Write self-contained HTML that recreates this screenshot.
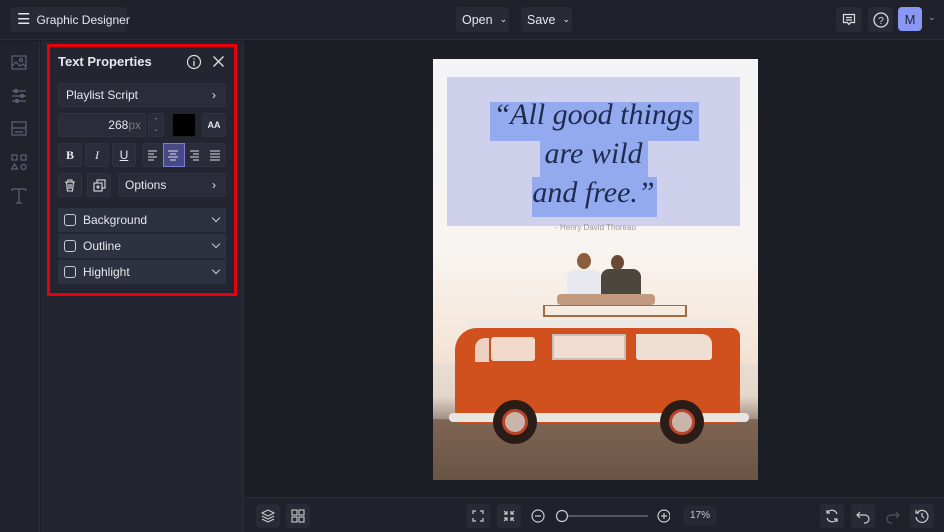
<!DOCTYPE html>
<html><head><meta charset="utf-8"><style>
*{box-sizing:border-box;margin:0;padding:0}
body{width:944px;height:532px;overflow:hidden;background:#1c1e26;font-family:"Liberation Sans",sans-serif;color:#e6e7ee;position:relative}
.abs{position:absolute}
.top{left:0;top:0;width:944px;height:40px;background:#1f212b;border-bottom:1px solid #2b2e3a}
.btn{position:absolute;background:#282b36;border-radius:4px;font-size:13px;color:#e6e7ee;display:flex;align-items:center;white-space:nowrap}
.side{left:0;top:41px;width:40px;height:491px;background:#20222c;border-right:1px solid #2b2e3a}
.panel{left:41px;top:41px;width:203px;height:491px;background:#232530;border-right:1px solid #2b2e3a}
.pb{position:absolute;background:#2a2d39;border:1px solid #30333f;border-radius:3px;font-size:12px;color:#e6e7ee;display:flex;align-items:center;justify-content:center}
.row{position:absolute;left:58px;width:168px;height:24px;background:#2e3140;font-size:12px;display:flex;align-items:center}
.cb{width:12px;height:12px;border:1.3px solid #c9cad4;border-radius:3px;margin:0 7px 0 6px}
.chev{position:absolute;right:7px;top:7px;width:6px;height:6px;border-right:1.4px solid #ccc;border-bottom:1.4px solid #ccc;transform:rotate(45deg)}
.bot{left:244px;top:497px;width:700px;height:35px;background:#1f212b;border-top:1px solid #2b2e3a}
.ib{position:absolute;width:24px;height:24px;background:#282b36;border-radius:4px;top:504px}
svg{display:block}
</style></head><body>
<div class="abs top"></div>
<div class="btn" style="left:10px;top:7px;width:117px;height:25px"><span style="margin-left:7px;font-size:15px;line-height:1">☰</span><span style="margin-left:6px;font-size:12px">Graphic Designer</span></div>
<div class="btn" style="left:456px;top:7px;width:53px;height:25px;padding-left:6px;font-size:12.5px">Open <span style="font-size:9px;margin-left:7px">⌄</span></div>
<div class="btn" style="left:521px;top:7px;width:51px;height:25px;padding-left:6px;font-size:12.5px">Save <span style="font-size:9px;margin-left:7px">⌄</span></div>
<div class="btn" style="left:836px;top:7px;width:26px;height:25px;justify-content:center"><svg width="14" height="14" viewBox="0 0 14 14"><path d="M1.5 1.5h11v8h-4l-1.5 2-1.5-2h-4z M4 4.5h6 M4 7h6" fill="none" stroke="#ddd" stroke-width="1.2"/></svg></div>
<div class="btn" style="left:868px;top:7px;width:25px;height:25px;justify-content:center"><svg width="16" height="16"><circle cx="8" cy="8" r="7" fill="none" stroke="#ddd" stroke-width="1.3"/><text x="8" y="12" font-size="10" text-anchor="middle" fill="#ddd" font-family="Liberation Sans">?</text></svg></div>
<div class="btn" style="left:898px;top:7px;width:24px;height:24px;background:#8a98f5;justify-content:center;color:#1f2030;font-size:13px">M</div>
<div class="abs" style="left:928px;top:12px;font-size:9px;color:#aaa">⌄</div>

<div class="abs side"></div>
<svg class="abs" style="left:11px;top:55px" width="16" height="160" viewBox="0 0 16 160" fill="none" stroke="#5e6274" stroke-width="1.2">
<rect x="1" y="1" width="14" height="13"/><path d="M1 11l4-4 4 4 3-2 3 3"/><circle cx="10" cy="5" r="1.5"/>
<path d="M1 36h14M1 41h14M1 46h14"/><circle cx="5" cy="36" r="1.5"/><circle cx="11" cy="41" r="1.5"/><circle cx="6" cy="46" r="1.5"/>
<rect x="1" y="67" width="14" height="13"/><path d="M1 73h14M4 77h8"/>
<rect x="1" y="100" width="5" height="5"/><rect x="10" y="100" width="5" height="5"/><path d="M3.5 109l3 5h-6z"/><circle cx="12.5" cy="112" r="2.5"/>
<path d="M1 134h14M8 134v14M1 134v2M15 134v2M5 148h6"/>
</svg>

<div class="abs panel"></div>
<div class="abs" style="left:47px;top:44px;width:190px;height:252px;border:3px solid #e8000e"></div>
<div class="abs" style="left:58px;top:54px;font-size:13px;font-weight:bold">Text Properties</div>
<svg class="abs" style="left:186px;top:54px" width="16" height="16"><circle cx="8" cy="8" r="6.5" fill="none" stroke="#ddd" stroke-width="1.2"/><path d="M8 7v5M8 4.5v1" stroke="#ddd" stroke-width="1.3"/></svg>
<svg class="abs" style="left:212px;top:55px" width="13" height="13"><path d="M1.5 1.5l10 10M11.5 1.5l-10 10" stroke="#ddd" stroke-width="1.4"/></svg>
<div class="pb" style="left:58px;top:83px;width:168px;height:24px;justify-content:flex-start;padding-left:7px">Playlist Script<span style="position:absolute;right:9px">›</span></div>
<div class="pb" style="left:58px;top:113px;width:88px;height:24px;justify-content:flex-end;padding-right:4px">268<span style="color:#777">px</span></div>
<div class="pb" style="left:148px;top:113px;width:16px;height:24px;font-size:7px;color:#888;flex-direction:column">⌃<br>⌄</div>
<div class="pb" style="left:172px;top:113px;width:24px;height:24px;background:#000;border-color:#222"></div>
<div class="pb" style="left:202px;top:113px;width:24px;height:24px;font-size:9px;font-weight:bold">AA</div>
<div class="pb" style="left:58px;top:143px;width:24px;height:24px;font-weight:bold;font-family:'Liberation Serif'">B</div>
<div class="pb" style="left:85px;top:143px;width:24px;height:24px;font-style:italic;font-family:'Liberation Serif'">I</div>
<div class="pb" style="left:112px;top:143px;width:24px;height:24px;text-decoration:underline">U</div>
<div class="pb" style="left:142px;top:143px;width:84px;height:24px"></div>
<div class="abs" style="left:163px;top:143px;width:22px;height:24px;background:#474a86;border:1px solid #7b80d0"></div>
<svg class="abs" style="left:142px;top:143px" width="84" height="24" stroke="#ddd" stroke-width="1.1">
<path d="M6 8h9M6 11h6M6 14h9M6 17h6"/><path d="M26 8h10M28 11h6M26 14h10M28 17h6"/><path d="M48 8h9M51 11h6M48 14h9M51 17h6"/><path d="M68 8h10M68 11h10M68 14h10M68 17h10"/></svg>
<div class="pb" style="left:58px;top:173px;width:24px;height:24px"><svg width="12" height="13" fill="none" stroke="#ddd" stroke-width="1.1"><path d="M1 3h10M4 3V1h4v2M2.5 3l1 9h5l1-9M5 5v5M7 5v5"/></svg></div>
<div class="pb" style="left:87px;top:173px;width:24px;height:24px"><svg width="13" height="13" fill="none" stroke="#ddd" stroke-width="1.1"><rect x="4" y="1" width="8" height="8"/><rect x="1" y="4" width="8" height="8" fill="#2a2d39"/><path d="M5 6v4M3 8h4"/></svg></div>
<div class="pb" style="left:118px;top:173px;width:108px;height:24px;justify-content:flex-start;padding-left:6px">Options<span style="position:absolute;right:9px">›</span></div>
<div class="row" style="top:208px"><span class="cb"></span>Background<span class="chev"></span></div>
<div class="row" style="top:234px"><span class="cb"></span>Outline<span class="chev"></span></div>
<div class="row" style="top:260px"><span class="cb"></span>Highlight<span class="chev"></span></div>

<!-- canvas -->
<div class="abs" style="left:433px;top:59px;width:325px;height:421px;background:linear-gradient(180deg,#f4f4f6 0%,#f8f4f1 45%,#f5e6d9 68%,#efd6c4 80%,#7e6452 86%,#6a5445 100%);overflow:hidden">
<div class="abs" style="left:14px;top:18px;width:293px;height:149px;background:#cfd0ec"></div>
<div class="abs" style="left:57px;top:43px;width:209px;height:39px;background:#93aaef"></div>
<div class="abs" style="left:107px;top:82px;width:108px;height:38px;background:#93aaef"></div>
<div class="abs" style="left:99px;top:118px;width:125px;height:40px;background:#93aaef"></div>
<div class="abs" style="left:14px;top:36px;width:293px;text-align:center;font-family:'Liberation Serif',serif;font-style:italic;font-size:30px;line-height:39px;color:#1e2b4e">“All good things<br>are wild<br>and free.”</div>
<div class="abs" style="left:0;top:164px;width:325px;text-align:center;font-size:8px;color:#999">- Henry David Thoreau</div>
<div class="abs" style="left:0;top:305px;width:325px;height:55px;background:#d5d7da;opacity:.35"></div>
<!-- people -->
<div class="abs" style="left:134px;top:211px;width:34px;height:34px;background:#e7e9ee;border-radius:8px 8px 3px 3px"></div>
<div class="abs" style="left:168px;top:210px;width:40px;height:35px;background:#4b463e;border-radius:8px 8px 3px 3px"></div>
<div class="abs" style="left:144px;top:194px;width:14px;height:16px;background:#8d5e3e;border-radius:50%"></div>
<div class="abs" style="left:178px;top:196px;width:13px;height:15px;background:#6a4a34;border-radius:50%"></div>
<div class="abs" style="left:124px;top:235px;width:98px;height:11px;background:#c29a80;border-radius:4px"></div>
<!-- rack -->
<div class="abs" style="left:110px;top:246px;width:144px;height:12px;border:2px solid #a06a42;border-top-width:1px"></div>
<!-- van -->
<div class="abs" style="left:34px;top:261px;width:266px;height:12px;background:#ece8e4;border-radius:8px 8px 0 0"></div>
<div class="abs" style="left:22px;top:269px;width:285px;height:95px;background:#d0511d;border-radius:22px 8px 6px 6px"></div>
<div class="abs" style="left:58px;top:278px;width:44px;height:24px;background:#f1dacb;border-radius:3px"></div>
<div class="abs" style="left:119px;top:275px;width:74px;height:26px;background:#f1ddd0;border:2px solid #c8c0b8"></div>
<div class="abs" style="left:203px;top:275px;width:76px;height:26px;background:#efded2;border-radius:0 10px 3px 3px"></div>
<div class="abs" style="left:42px;top:279px;width:14px;height:24px;background:#ebd2c0;border-radius:10px 0 0 0"></div>
<div class="abs" style="left:16px;top:354px;width:300px;height:9px;background:#e8e4e0;border-radius:4px"></div>
<div class="abs" style="left:60px;top:341px;width:44px;height:44px;background:#2a1d18;border-radius:50%"></div>
<div class="abs" style="left:69px;top:350px;width:26px;height:26px;background:#c9b5aa;border:3px solid #b9442a;border-radius:50%"></div>
<div class="abs" style="left:227px;top:341px;width:44px;height:44px;background:#2a1d18;border-radius:50%"></div>
<div class="abs" style="left:236px;top:350px;width:26px;height:26px;background:#c9b5aa;border:3px solid #b9442a;border-radius:50%"></div>
</div>

<!-- bottom -->
<div class="abs bot"></div>
<div class="ib" style="left:256px"><svg width="24" height="24" fill="none" stroke="#ccc" stroke-width="1.1"><path d="M12 6l6 3-6 3-6-3z M6 12l6 3 6-3 M6 15l6 3 6-3"/></svg></div>
<div class="ib" style="left:286px"><svg width="24" height="24" fill="none" stroke="#ccc" stroke-width="1.1"><rect x="6" y="6" width="5" height="5"/><rect x="13" y="6" width="5" height="5"/><rect x="6" y="13" width="5" height="5"/><rect x="13" y="13" width="5" height="5"/></svg></div>
<div class="ib" style="left:466px"><svg width="24" height="24" fill="none" stroke="#ccc" stroke-width="1.2"><path d="M7 10V7h3M14 7h3v3M17 14v3h-3M10 17H7v-3"/></svg></div>
<div class="ib" style="left:497px"><svg width="24" height="24" fill="none" stroke="#ccc" stroke-width="1.2"><path d="M7 7l3 3M10 7v3H7M17 7l-3 3M14 7v3h3M7 17l3-3M7 14h3v3M17 17l-3-3M17 14h-3v3"/></svg></div>
<svg class="abs" style="left:530px;top:508px" width="140" height="16" fill="none" stroke="#ccc" stroke-width="1.2"><circle cx="8" cy="8" r="6"/><path d="M5 8h6"/><path d="M38 8h80" stroke="#777"/><circle cx="32" cy="8" r="5.5" fill="#1f212b"/><circle cx="134" cy="8" r="6"/><path d="M131 8h6M134 5v6"/></svg>
<div class="abs" style="left:683px;top:506px;width:34px;height:20px;background:#262934;border-radius:3px;font-size:10px;color:#ccc;text-align:center;line-height:20px">17%</div>
<div class="ib" style="left:820px"><svg width="24" height="24" fill="none" stroke="#ccc" stroke-width="1.2"><path d="M17 10a5.5 5.5 0 0 0-10-1M7 14a5.5 5.5 0 0 0 10 1M7 6v3h3M17 18v-3h-3"/></svg></div>
<div class="ib" style="left:851px"><svg width="24" height="24" fill="none" stroke="#ccc" stroke-width="1.2"><path d="M9 8l-3 3 3 3M6 11h8a4 4 0 0 1 0 8h-1"/></svg></div>
<div class="ib" style="left:881px;background:none"><svg width="24" height="24" fill="none" stroke="#555" stroke-width="1.2"><path d="M15 8l3 3-3 3M18 11h-8a4 4 0 0 0 0 8h1"/></svg></div>
<div class="ib" style="left:910px"><svg width="24" height="24" fill="none" stroke="#ccc" stroke-width="1.2"><path d="M7 9a6 6 0 1 1-1 4M6 6v3h3M12 9v3l2 2"/></svg></div>
</body></html>
